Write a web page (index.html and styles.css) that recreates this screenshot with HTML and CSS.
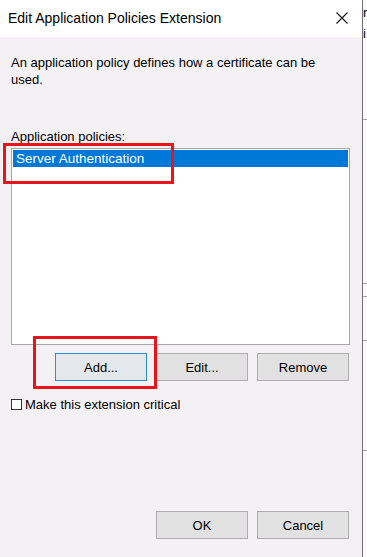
FILE: index.html
```html
<!DOCTYPE html>
<html lang="en">
<head>
    <meta charset="UTF-8">
    <meta name="viewport" content="width=device-width, initial-scale=1.0">
    <title>Edit Application Policies Extension</title>
    <link rel="stylesheet" href="styles.css">
</head>
<body>
    <div class="screen">
        <div class="dialog">
            <div class="titlebar">
                <span class="title">Edit Application Policies Extension</span>
                <svg class="close" width="12" height="12" viewBox="0 0 12 12">
                    <path d="M0.5 0.5L11.5 11.5M11.5 0.5L0.5 11.5" stroke="#111" stroke-width="1.1" fill="none"/>
                </svg>
            </div>
            <div class="content">
                <p class="desc">An application policy defines how a certificate can be<br>used.</p>
                <div class="label">Application policies:</div>
                <div class="listbox">
                    <div class="item selected">Server Authentication</div>
                </div>
                <div class="actions">
                    <a class="btn focused">Add...</a>
                    <a class="btn">Edit...</a>
                    <a class="btn">Remove</a>
                </div>
                <label class="check"><span class="box"></span>Make this extension critical</label>
                <div class="footer">
                    <a class="btn">OK</a>
                    <a class="btn">Cancel</a>
                </div>

                <div class="mark mark-list"></div>
                <div class="mark mark-add"></div>
            </div>
        </div>
        <div class="behind">
            <span class="frag frag-1">r</span>
            <span class="frag frag-2">i</span>
            <div class="rule rule-1"></div>
            <div class="rule rule-2"></div>
            <div class="rule rule-3"></div>
            <div class="rule rule-4"></div>
            <div class="rule rule-5"></div>
        </div>
    </div>
</body>
</html>
```

FILE: styles.css
```css
body {
    margin: 0;
    padding: 0;
    overflow: hidden;
    font-family: "Liberation Sans", Arial, sans-serif;
    color: #000;
}
.screen {
    display: flex;
    width: 367px;
    height: 557px;
    background: #fff;
}
.dialog {
    width: 362px;
    flex-shrink: 0;
    display: flex;
    flex-direction: column;
    background: #f4f1f4;
    border-right: 1px solid #707070;
}
.titlebar {
    height: 37px;
    flex-shrink: 0;
    background: #fff;
    display: flex;
    align-items: center;
    justify-content: space-between;
    padding: 0 14px 0 8px;
}
.title {
    font-size: 14px;
    margin-top: -1px;
}
.close {
    display: block;
    margin-top: -1px;
}
.content {
    position: relative;
    padding: 17px 12px 0 11px;
    font-size: 13px;
    line-height: 17px;
}
.desc {
    margin: 0;
}
.label {
    margin-top: 40px;
}
.listbox {
    margin-top: 3px;
    height: 193px;
    background: #fff;
    border: 1px solid #a6a6a6;
    padding: 1px;
}
.item {
    height: 17px;
    line-height: 17px;
    padding-left: 3px;
    font-size: 13.5px;
}
.selected {
    background: #0078d7;
    color: #fff;
}
.actions,
.footer {
    display: flex;
    justify-content: flex-end;
    gap: 9px;
    padding-right: 1px;
}
.actions {
    margin-top: 8px;
}
.footer {
    margin-top: 98px;
}
.btn {
    display: flex;
    align-items: center;
    justify-content: center;
    box-sizing: border-box;
    width: 92px;
    height: 28px;
    background: #e1e1e1;
    border: 1px solid #adadad;
    font-size: 13px;
}
.btn.focused {
    border-color: #2f8ed8;
    background: #e4e8ec;
}
.check {
    display: flex;
    align-items: center;
    gap: 3px;
    margin-top: 15px;
}
.box {
    width: 9px;
    height: 9px;
    border: 1px solid #333;
    background: #fff;
}
.mark {
    position: absolute;
    border: 3px solid #e8141c;
    box-sizing: border-box;
}
.mark-list {
    left: 3px;
    top: 106px;
    width: 171px;
    height: 41px;
}
.mark-add {
    left: 33px;
    top: 299px;
    width: 124px;
    height: 53px;
}
.behind {
    position: relative;
    flex: 1;
    background: #fbfbfb;
    overflow: hidden;
}
.frag {
    position: absolute;
    left: 0;
    font-size: 13px;
    line-height: 17px;
}
.frag-1 {
    top: 4px;
}
.frag-2 {
    top: 25px;
}
.rule {
    position: absolute;
    left: 0;
    right: 0;
    height: 1px;
    background: #a0a0a0;
}
.rule-1 { top: 119px; }
.rule-2 { top: 283px; }
.rule-3 { top: 296px; }
.rule-4 { top: 340px; }
.rule-5 { top: 450px; }
```
